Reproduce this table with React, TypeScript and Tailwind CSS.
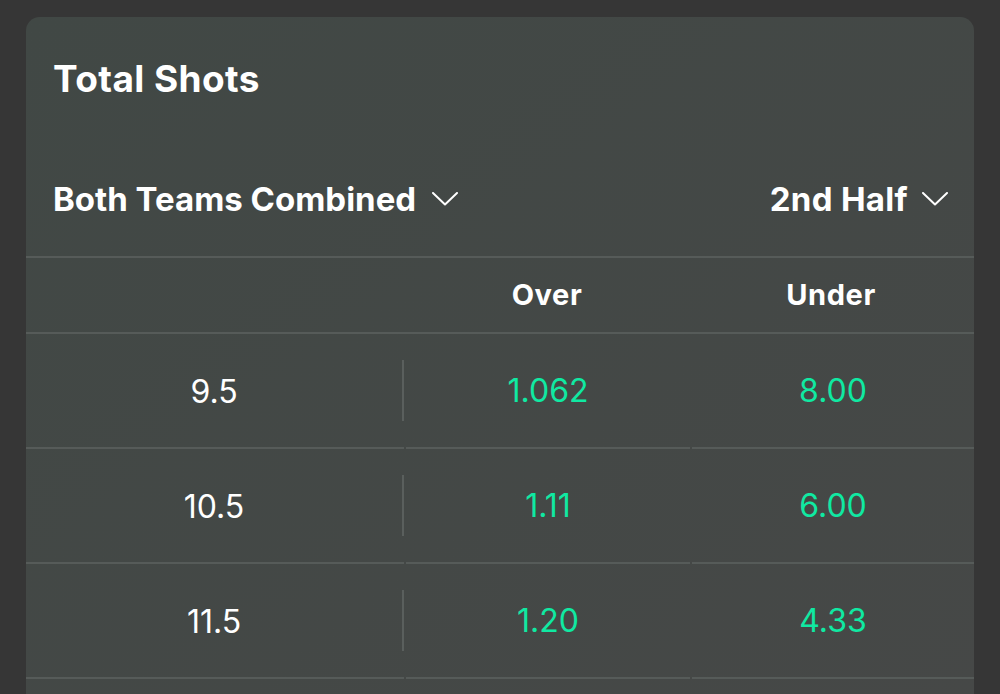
import React from "react";

const Chevron = () => (
  <svg width="26" height="14" viewBox="0 0 26 14" fill="none" className="shrink-0">
    <polyline points="1,1 13,12.5 25,1" stroke="#ffffff" strokeWidth="2" strokeLinecap="round" strokeLinejoin="round" />
  </svg>
);

const rows = [
  { line: "9.5", over: "1.062", under: "8.00" },
  { line: "10.5", over: "1.11", under: "6.00" },
  { line: "11.5", over: "1.20", under: "4.33" },
];

export default function App() {
  return (
    <div
      className="w-[1000px] h-[694px] overflow-hidden bg-[#363636] pt-[17px] px-[26px]"
      style={{ fontFamily: "Inter, 'Noto Sans', sans-serif" }}
    >
      <div className="rounded-t-[14px] bg-gradient-to-br from-[#414845] to-[#464847] h-[700px] text-white">
        <div className="pt-[40px] px-[27px] h-[84px]">
          <div className="text-[37px] leading-[44px] font-bold tracking-[0.4px]">Total Shots</div>
        </div>
        <div className="mt-[76px] h-[44px] pr-[26px] pl-[27px] flex items-center justify-between">
          <div className="flex items-center gap-[16px]">
            <span className="text-[33px] leading-[44px] font-bold">Both Teams Combined</span>
            <Chevron />
          </div>
          <div className="flex items-center gap-[14px]">
            <span className="text-[33px] leading-[44px] font-bold tracking-[0.3px]">2nd Half</span>
            <Chevron />
          </div>
        </div>
        <div className="h-[35px]" />
        <div className="h-[2px] bg-[#565b59]" />
        <div className="grid grid-cols-[378px_284px_1fr] h-[74px] items-center">
          <div />
          <div className="text-center text-[29px] font-bold tracking-[0.6px] pl-[2px]">Over</div>
          <div className="text-center text-[29px] font-bold tracking-[0.6px]">Under</div>
        </div>
        <div className="h-[2px] bg-[#565b59]" />
        {rows.map((r) => (
          <div key={r.line} className="grid grid-cols-[378px_284px_1fr] gap-x-[2px]">
            <div className="h-[115px] border-b-2 border-[#565b59] flex items-center relative">
              <div className="flex-1 text-center text-[32px] pt-[2px]">{r.line}</div>
              <div className="w-[2px] h-[61px] bg-[#5a5f5d]" />
            </div>
            <div className="h-[115px] border-b-2 border-[#565b59] flex items-center justify-center text-[32px] text-[#10e9a2]">
              {r.over}
            </div>
            <div className="h-[115px] border-b-2 border-[#565b59] flex items-center justify-center text-[32px] text-[#10e9a2]">
              {r.under}
            </div>
          </div>
        ))}
      </div>
    </div>
  );
}
